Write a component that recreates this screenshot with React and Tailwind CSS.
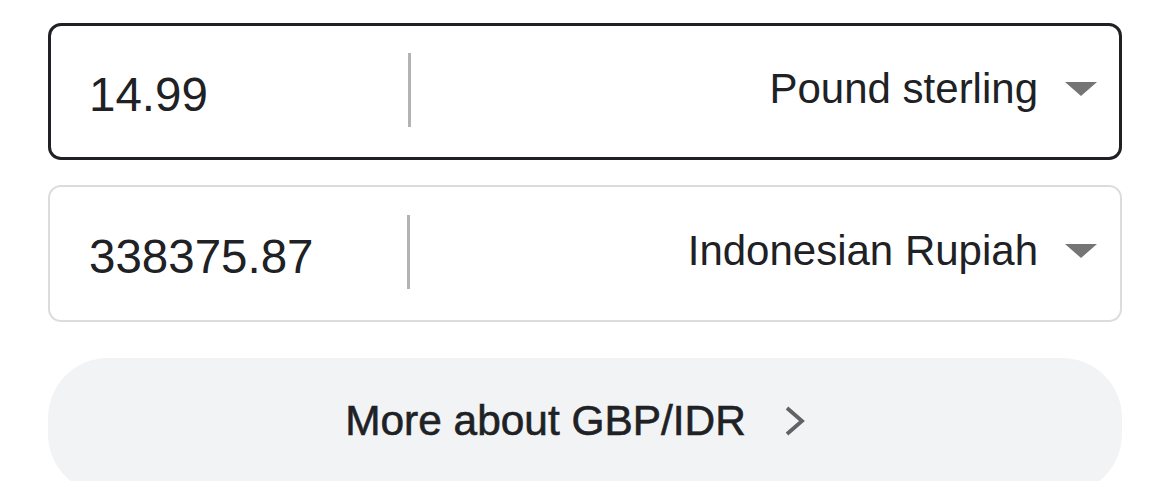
const font = { fontFamily: '"Liberation Sans", Arial, sans-serif' };

function Caret() {
  return (
    <svg width="32" height="16" viewBox="0 0 32 16" className="mb-[6px] shrink-0">
      <polygon points="0,1 32,1 16,15" fill="#757575" />
    </svg>
  );
}

function CurrencyRow({ amount, currency, active }) {
  return (
    <div
      className={
        'flex h-[137px] items-center rounded-[13px] bg-white ' +
        (active ? 'border-[3px] border-[#202124]' : 'border-2 border-[#dadce0]')
      }
    >
      <div className={'flex w-[357px] shrink-0 items-center ' + (active ? 'pl-[38px]' : 'pl-[39px]')}>
        <span className="pt-[6px] text-[47.5px] leading-normal text-[#202124]">{amount}</span>
      </div>
      <div className="mb-[4px] h-[74px] w-[3px] shrink-0 bg-[#b3b3b3]" />
      <div className={'flex flex-1 items-center justify-end gap-[27px] ' + (active ? 'pr-[22px]' : 'pr-[23px]')}>
        <span className="mb-[6px] text-[42px] leading-normal text-[#202124]">{currency}</span>
        <Caret />
      </div>
    </div>
  );
}

export default function App() {
  return (
    <div className="h-[481px] w-[1170px] overflow-hidden bg-white px-[48px] pt-[23px]" style={font}>
      <div className="flex flex-col">
        <CurrencyRow amount="14.99" currency="Pound sterling" active />
        <div className="mt-[25px]">
          <CurrencyRow amount="338375.87" currency="Indonesian Rupiah" />
        </div>
        <button
          type="button"
          className="mt-[36px] flex h-[136px] w-full shrink-0 items-center justify-center rounded-[60px] bg-[#f1f3f4] pb-[10px] pr-[19px]"
        >
          <span
            className="text-[42.4px] leading-normal text-[#202124] [-webkit-text-stroke:0.6px_#202124]"
          >
            More about GBP/IDR
          </span>
          <svg width="24" height="34" viewBox="0 0 24 34" className="ml-[36px] shrink-0">
            <polyline points="5,4 20,17 5,30" fill="none" stroke="#5f6368" strokeWidth="3.8" />
          </svg>
        </button>
      </div>
    </div>
  );
}
